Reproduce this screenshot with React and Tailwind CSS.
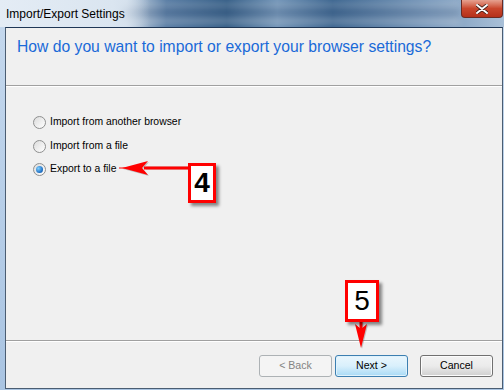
import React from "react";

const UI = { fontFamily: "'Liberation Sans', Arial, sans-serif" };

function Radio({ checked, label }) {
  return (
    <div className="flex items-center gap-[4px] h-[13px]">
      <div className="w-[13px] h-[13px] rounded-full border border-[#8e8f8f] bg-gradient-to-br from-[#dcdcdc] to-[#ffffff] flex items-center justify-center">
        {checked && (
          <div className="w-[7px] h-[7px] rounded-full bg-[radial-gradient(circle_at_35%_35%,#7fd0ff,#1a6ac0_70%,#0d4a8a)]" />
        )}
      </div>
      <span className="text-[10.4px] text-black leading-none" style={UI}>{label}</span>
    </div>
  );
}

export default function App() {
  return (
    <div className="relative w-[504px] h-[390px] overflow-hidden bg-gradient-to-b from-[#c6d9ee] to-[#a9c4e2] flex flex-col" style={{ fontFamily: "'Liberation Sans', Arial, sans-serif" }}>
      {/* title bar */}
      <div className="relative h-[27px] flex items-center pl-[6px] bg-[linear-gradient(90deg,#dbe6f1_0%,#cfdcea_25%,#5479a2_33%,#2f5983_45%,#6f92b6_55%,#36608c_66%,#7898bb_85%,#a9c0d8_100%)] overflow-hidden">
        <div className="absolute left-[120px] top-[2px] w-[340px] h-[22px] bg-[linear-gradient(180deg,rgba(255,255,255,0.25),rgba(20,50,90,0.2),rgba(255,255,255,0.35))] blur-[3px]" />
        <div className="absolute left-0 top-0 w-[150px] h-[27px] bg-[linear-gradient(90deg,#e4ecf5_0%,#dae5f0_75%,rgba(218,229,240,0)_100%)]" />
        <span className="relative text-[12px] text-black" style={UI}>Import/Export Settings</span>
        <div className="absolute right-[1px] top-0 w-[42px] h-[18px] rounded-b-[4px] border border-t-0 border-[#6b2a22] bg-gradient-to-b from-[#e5a190] via-[#c9462c] to-[#b5301a] flex items-center justify-center">
          <svg width="12" height="10" viewBox="0 0 12 10">
            <path d="M1 1 L11 9 M11 1 L1 9" stroke="#3a1a14" strokeWidth="3.5" strokeLinecap="round" />
            <path d="M1 1 L11 9 M11 1 L1 9" stroke="#ffffff" strokeWidth="2" strokeLinecap="round" />
          </svg>
        </div>
      </div>
      {/* client */}
      <div className="ml-[5px] mr-[1px] mb-[1px] flex-1 flex flex-col border border-[#4b5d72] border-t-[#1f3756] bg-[#f0f0f0]">
        {/* header */}
        <div className="h-[58px] pl-[11px] pt-[8px] border-b border-[#a0a0a0]">
          <div className="text-[15.7px] text-[#1a6ad8] leading-[22px]">How do you want to import or export your browser settings?</div>
        </div>
        <div className="h-[254px] border-t border-white pl-[27px] pt-[29px] flex flex-col gap-[10.5px]">
          <Radio label="Import from another browser" />
          <Radio label="Import from a file" />
          <Radio checked label="Export to a file" />
        </div>
        <div className="flex-1 border-t border-[#a0a0a0]">
          <div className="h-full border-t border-white flex justify-end items-start pt-[13px] pr-[9px] gap-[3px]" style={UI}>
            <div className="w-[73px] h-[22px] rounded-[3px] border border-[#adb2b5] bg-[#f4f4f4] text-[#838383] text-[10.6px] flex items-center justify-center">&lt; Back</div>
            <div className="w-[73px] h-[22px] rounded-[3px] border border-[#3c7fb1] bg-gradient-to-b from-[#eaf6fd] via-[#d9f0fc] to-[#a7d9f5] shadow-[inset_0_0_0_1px_#dff2fc] text-black text-[10.6px] flex items-center justify-center">Next &gt;</div>
            <div className="ml-[9px] w-[73px] h-[22px] rounded-[3px] border border-[#707070] bg-gradient-to-b from-[#f2f2f2] via-[#ebebeb] to-[#cfcfcf] shadow-[inset_0_0_0_1px_#fcfcfc] text-black text-[10.6px] flex items-center justify-center">Cancel</div>
          </div>
        </div>
      </div>

      {/* annotation 4 */}
      <svg className="absolute left-[118px] top-[158px]" width="75" height="20" viewBox="0 0 75 20">
        <g transform="translate(1,1)" opacity="0.35">
          <path d="M27 9 L72 9" stroke="#666" strokeWidth="3" />
          <path d="M4 10 L30 3 L24 10 L30 17 Z" fill="#666" />
        </g>
        <path d="M1 10 L8 10" stroke="#ff0000" strokeWidth="1" />
        <path d="M26 10 L72 10" stroke="#ff0000" strokeWidth="3" />
        <path d="M4 10 L30 3 L24 10 L30 17 Z" fill="#ff0000" />
      </svg>
      <div className="absolute left-[188px] top-[163px] w-[28px] h-[40px] border-[3px] border-[#ff0000] bg-white shadow-[3px_3px_3px_rgba(0,0,0,0.45)] flex items-center justify-center">
        <span className="text-[28px] font-bold text-black leading-none" style={UI}>4</span>
      </div>

      {/* annotation 5 */}
      <svg className="absolute left-[350px] top-[318px]" width="22" height="34" viewBox="0 0 22 34">
        <g transform="translate(1,1)" opacity="0.35">
          <path d="M11 0 L11 12" stroke="#666" strokeWidth="3" />
          <path d="M11 30 L5 6 L11 11 L17 6 Z" fill="#666" />
        </g>
        <path d="M11 0 L11 12" stroke="#ff0000" strokeWidth="3" />
        <path d="M11 30 L5 6 L11 11 L17 6 Z" fill="#ff0000" />
      </svg>
      <div className="absolute left-[345px] top-[280px] w-[34px] h-[42px] border-[3px] border-[#ff0000] bg-white shadow-[3px_3px_3px_rgba(0,0,0,0.45)] flex items-center justify-center">
        <span className="text-[28px] text-black leading-none" style={UI}>5</span>
      </div>
    </div>
  );
}
